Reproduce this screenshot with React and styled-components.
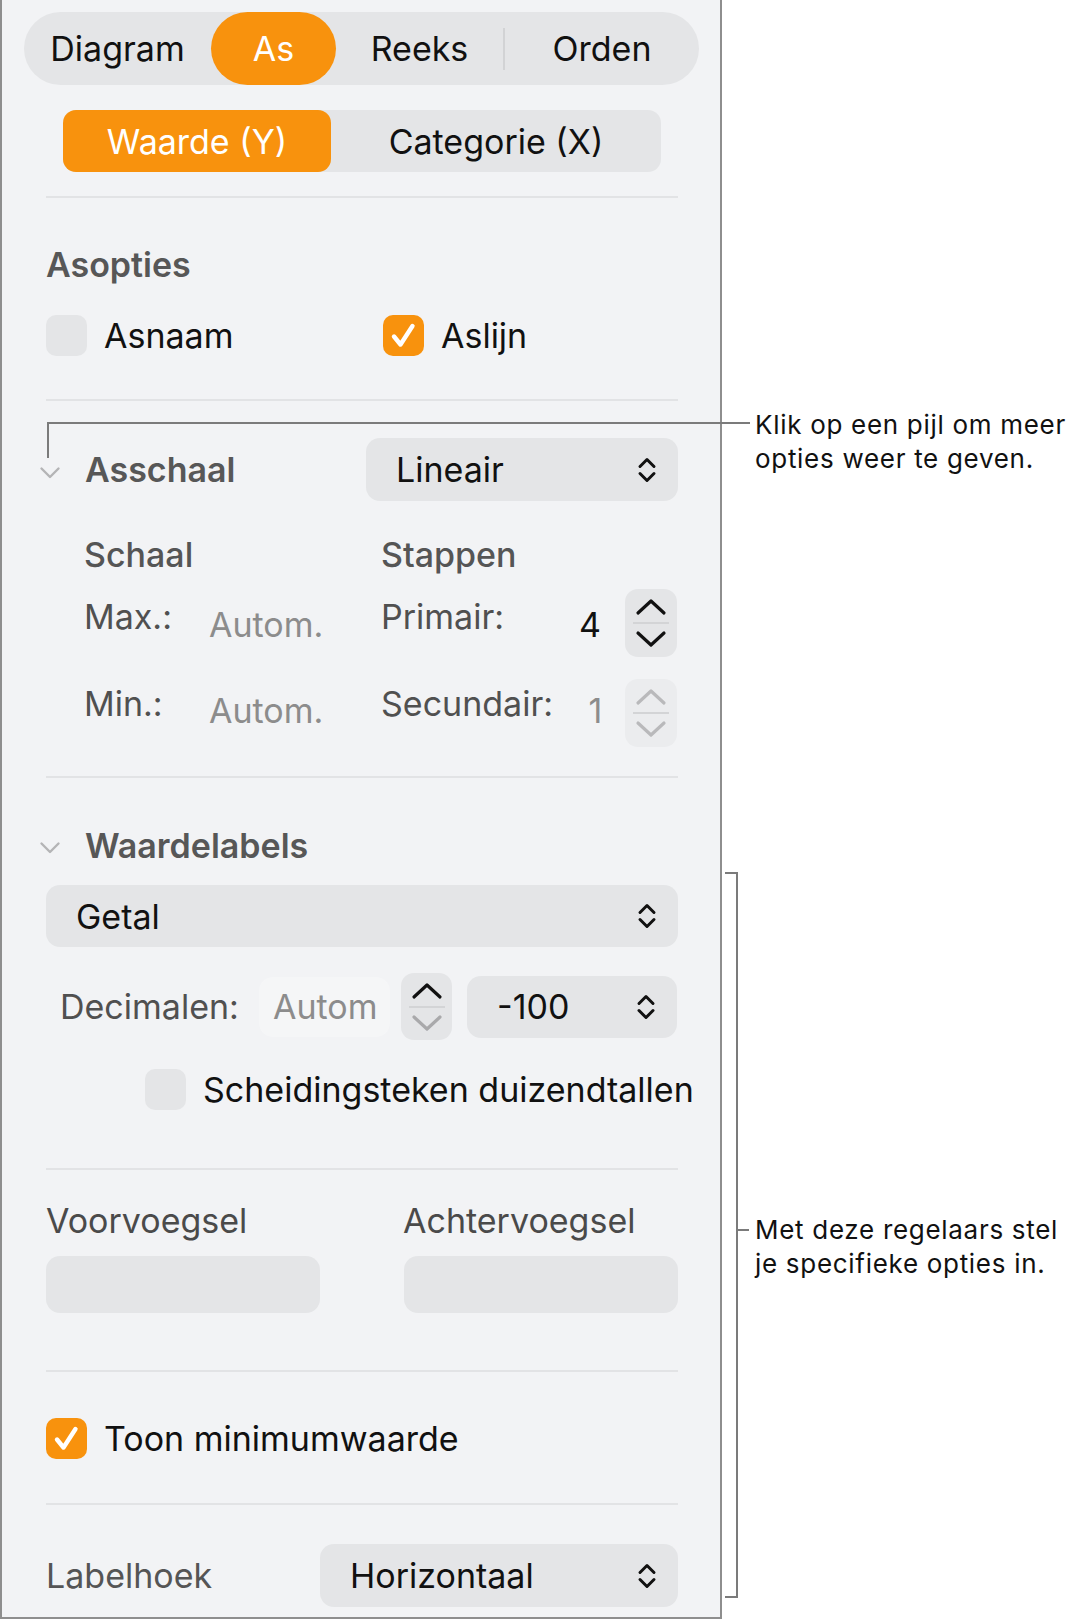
import React from "react";
import styled, { createGlobalStyle } from "styled-components";

const GlobalStyle = createGlobalStyle`
  html, body {
    margin: 0;
    padding: 0;
    background: #ffffff;
  }
  body {
    font-family: Inter, "Noto Sans", "Liberation Sans", sans-serif;
    color: #111111;
  }
`;

const ORANGE = "#f8920d";
const FILL = "#e4e5e7";

const Page = styled.div`
  position: relative;
  width: 1080px;
  height: 1620px;
  display: flex;
  align-items: flex-start;
  overflow: hidden;
`;

const Panel = styled.div`
  width: 718px;
  border: 2px solid #8e8e8e;
  border-top: none;
  background: #f2f3f5;
  padding: 12px 0 10px;
  font-size: 34px;
`;

const TabBar = styled.div`
  margin: 0 21px 0 22px;
  height: 73px;
  border-radius: 37px;
  background: ${FILL};
  display: flex;
  align-items: center;
`;

const Tab = styled.div`
  flex: none;
  width: ${(p) => p.$w}px;
  height: 100%;
  display: flex;
  align-items: center;
  justify-content: center;
  border-radius: 37px;
  background: ${(p) => (p.$active ? ORANGE : "transparent")};
  color: ${(p) => (p.$active ? "#ffffff" : "#111111")};
`;

const TabSep = styled.div`
  flex: none;
  width: 2px;
  height: 42px;
  background: #d2d3d5;
`;

const Body = styled.div`
  padding: 0 42px 0 44px;
`;

const SubSeg = styled.div`
  margin: 25px 17px 0;
  height: 62px;
  border-radius: 13px;
  background: ${FILL};
  display: flex;
`;

const SubItem = styled.div`
  flex: ${(p) => (p.$w ? "none" : "1")};
  width: ${(p) => (p.$w ? `${p.$w}px` : "auto")};
  display: flex;
  align-items: center;
  justify-content: center;
  border-radius: 13px;
  background: ${(p) => (p.$active ? ORANGE : "transparent")};
  color: ${(p) => (p.$active ? "#ffffff" : "#111111")};
`;

const Divider = styled.div`
  height: 2px;
  background: #e2e3e5;
  margin-top: ${(p) => p.$mt}px;
`;

const SectionTitle = styled.div`
  margin-top: ${(p) => p.$mt || 0}px;
  line-height: 40px;
  font-weight: 600;
  color: #575757;
`;

const CheckRow = styled.div`
  margin-top: ${(p) => p.$mt}px;
  padding-left: ${(p) => p.$pl || 0}px;
  height: 42px;
  display: flex;
  align-items: center;
`;

const CheckItem = styled.label`
  display: flex;
  align-items: center;
  gap: 17px;
  width: ${(p) => (p.$w ? `${p.$w}px` : "auto")};
  white-space: nowrap;
`;

const Box = styled.span`
  flex: none;
  width: 41px;
  height: 41px;
  border-radius: 10px;
  background: ${(p) => (p.$on ? ORANGE : FILL)};
  display: flex;
  align-items: center;
  justify-content: center;
`;

const HeaderRow = styled.div`
  margin-top: ${(p) => p.$mt}px;
  height: ${(p) => p.$h}px;
  display: flex;
  align-items: center;
  justify-content: space-between;
`;

const Disclosure = styled.div`
  display: flex;
  align-items: center;
  margin-left: -7px;
  font-weight: 600;
  color: #575757;
`;

const DiscIcon = styled.span`
  flex: none;
  width: 46px;
  display: flex;
  padding-top: 6px;
`;

const Select = styled.div`
  box-sizing: border-box;
  width: ${(p) => (p.$w ? `${p.$w}px` : "100%")};
  height: ${(p) => p.$h || 62}px;
  margin-top: ${(p) => p.$mt || 0}px;
  padding: 0 21px 0 30px;
  border-radius: 14px;
  background: ${FILL};
  display: flex;
  align-items: center;
  justify-content: space-between;
  color: #111111;
`;

const ScaleGrid = styled.div`
  margin-top: ${(p) => p.$mt}px;
  padding-left: 38px;
  height: ${(p) => p.$h}px;
  display: grid;
  grid-template-columns: 125px 172px 198px 46px 52px;
  align-items: center;
`;

const ColHead = styled.div`
  font-weight: 500;
  color: #555555;
`;

const FieldLabel = styled.div`
  color: #505050;
  transform: translateY(${(p) => p.$dy || 0}px);
  white-space: nowrap;
`;

const Ghost = styled.div`
  color: ${(p) => (p.$dim ? "#8c8c8c" : "#111111")};
  transform: translateY(${(p) => p.$dy || 0}px);
`;

const StepBox = styled.div`
  width: ${(p) => p.$w || 52}px;
  height: ${(p) => p.$h || 68}px;
  border-radius: 13px;
  background: ${(p) => (p.$off ? "#ebecee" : FILL)};
  display: flex;
  flex-direction: column;
  align-items: center;
  justify-content: center;
`;

const StepMid = styled.span`
  width: 36px;
  height: 2px;
  margin: 6px 0;
  background: #d3d4d6;
`;

const DecRow = styled.div`
  margin-top: 26px;
  height: 67px;
  padding-left: 14px;
  display: flex;
  align-items: center;
`;

const DecLabel = styled.div`
  width: 199px;
  color: #505050;
`;

const AutoField = styled.div`
  width: 131px;
  height: 60px;
  margin-right: 11px;
  border-radius: 14px;
  box-sizing: border-box;
  padding-left: 14px;
  display: flex;
  align-items: center;
  color: #8c8c8c;
  background: rgba(255, 255, 255, 0.25);
`;

const PairLabels = styled.div`
  margin-top: 30px;
  height: 40px;
  display: grid;
  grid-template-columns: 357px 1fr;
  align-items: center;
  color: #4a4a4a;
`;

const PairInputs = styled.div`
  margin-top: 16px;
  display: grid;
  grid-template-columns: 274px 274px;
  justify-content: space-between;
`;

const TextInput = styled.div`
  height: 57px;
  border-radius: 14px;
  background: ${FILL};
`;

const AngleLabel = styled.div`
  color: #555555;
`;

const Notes = styled.div`
  padding-left: 33px;
  font-size: 26px;
  line-height: 34px;
  letter-spacing: 0.7px;
  color: #111111;
`;

const Note = styled.p`
  margin: ${(p) => p.$mt}px 0 0;
  white-space: nowrap;
`;

const Leaders = styled.svg`
  position: absolute;
  left: 0;
  top: 0;
  pointer-events: none;
`;

const Check = () => (
  <svg width="41" height="41" viewBox="0 0 41 41">
    <path d="M11 21.5 L17.5 29.5 L29.5 11" fill="none" stroke="#fff" strokeWidth="4.4" strokeLinecap="round" strokeLinejoin="round" />
  </svg>
);

const UpDown = () => (
  <svg width="20" height="28" viewBox="0 0 20 28">
    <polyline points="3,10.5 10,3.5 17,10.5" fill="none" stroke="#111" strokeWidth="3" strokeLinecap="round" strokeLinejoin="round" />
    <polyline points="3,17.5 10,24.5 17,17.5" fill="none" stroke="#111" strokeWidth="3" strokeLinecap="round" strokeLinejoin="round" />
  </svg>
);

const Chevron = ({ up, color }) => (
  <svg width="32" height="18" viewBox="0 0 32 18">
    <polyline
      points={up ? "3,15 16,3 29,15" : "3,3 16,15 29,3"}
      fill="none"
      stroke={color}
      strokeWidth="3.2"
      strokeLinecap="round"
      strokeLinejoin="round"
    />
  </svg>
);

const SmallChevron = () => (
  <svg width="22" height="14" viewBox="0 0 22 14">
    <polyline points="2.5,2.5 11,11 19.5,2.5" fill="none" stroke="#b4b4b6" strokeWidth="2.4" strokeLinecap="round" strokeLinejoin="round" />
  </svg>
);

const Stepper = ({ upColor = "#111", downColor = "#111", off, w, h }) => (
  <StepBox $off={off} $w={w} $h={h}>
    <Chevron up color={upColor} />
    <StepMid />
    <Chevron color={downColor} />
  </StepBox>
);

const Checkbox = ({ on, label, w }) => (
  <CheckItem $w={w}>
    <Box $on={on}>{on && <Check />}</Box>
    {label}
  </CheckItem>
);

export default function App() {
  return (
    <Page>
      <GlobalStyle />
      <Panel>
        <TabBar>
          <Tab $w={187}>Diagram</Tab>
          <Tab $w={125} $active>As</Tab>
          <Tab $w={167}>Reeks</Tab>
          <TabSep />
          <Tab $w={194}>Orden</Tab>
        </TabBar>

        <Body>
          <SubSeg>
            <SubItem $w={268} $active>Waarde (Y)</SubItem>
            <SubItem>Categorie (X)</SubItem>
          </SubSeg>

          <Divider $mt={24} />

          <SectionTitle $mt={47}>Asopties</SectionTitle>
          <CheckRow $mt={29}>
            <Checkbox label="Asnaam" w={337} />
            <Checkbox on label="Aslijn" />
          </CheckRow>

          <Divider $mt={43} />

          <HeaderRow $mt={37} $h={63}>
            <Disclosure>
              <DiscIcon><SmallChevron /></DiscIcon>
              Asschaal
            </Disclosure>
            <Select $w={312} $h={63}>
              Lineair
              <UpDown />
            </Select>
          </HeaderRow>

          <ScaleGrid $mt={33} $h={40}>
            <ColHead>Schaal</ColHead>
            <span />
            <ColHead>Stappen</ColHead>
          </ScaleGrid>

          <ScaleGrid $mt={15} $h={68}>
            <FieldLabel $dy={-7}>Max.:</FieldLabel>
            <Ghost $dim $dy={1}>Autom.</Ghost>
            <FieldLabel $dy={-7}>Primair:</FieldLabel>
            <Ghost $dy={1}>4</Ghost>
            <Stepper />
          </ScaleGrid>

          <ScaleGrid $mt={22} $h={68}>
            <FieldLabel $dy={-10}>Min.:</FieldLabel>
            <Ghost $dim $dy={-3}>Autom.</Ghost>
            <FieldLabel $dy={-10}>Secundair:</FieldLabel>
            <Ghost $dim $dy={-3}>&nbsp;1</Ghost>
            <Stepper off upColor="#b9b9bb" downColor="#b9b9bb" />
          </ScaleGrid>

          <Divider $mt={29} />

          <HeaderRow $mt={47} $h={40}>
            <Disclosure>
              <DiscIcon><SmallChevron /></DiscIcon>
              Waardelabels
            </Disclosure>
          </HeaderRow>

          <Select $mt={20} $h={62}>
            Getal
            <UpDown />
          </Select>

          <DecRow>
            <DecLabel>Decimalen:</DecLabel>
            <AutoField>Autom</AutoField>
            <Stepper w={51} h={67} downColor="#a9a9ab" />
            <Select $w={210} $h={62} style={{ marginLeft: 15 }}>
              -100
              <UpDown />
            </Select>
          </DecRow>

          <CheckRow $mt={28} $pl={99}>
            <Checkbox label="Scheidingsteken duizendtallen" />
          </CheckRow>

          <Divider $mt={58} />

          <PairLabels>
            <span>Voorvoegsel</span>
            <span>Achtervoegsel</span>
          </PairLabels>
          <PairInputs>
            <TextInput />
            <TextInput />
          </PairInputs>

          <Divider $mt={57} />

          <CheckRow $mt={45}>
            <Checkbox on label="Toon minimumwaarde" />
          </CheckRow>

          <Divider $mt={44} />

          <HeaderRow $mt={39} $h={63}>
            <AngleLabel>Labelhoek</AngleLabel>
            <Select $w={358} $h={63}>
              Horizontaal
              <UpDown />
            </Select>
          </HeaderRow>
        </Body>
      </Panel>

      <Notes>
        <Note $mt={408}>
          Klik op een pijl om meer
          <br />
          opties weer te geven.
        </Note>
        <Note $mt={737}>
          Met deze regelaars stel
          <br />
          je specifieke opties in.
        </Note>
      </Notes>

      <Leaders width="1080" height="1620" viewBox="0 0 1080 1620">
        <g fill="none" stroke="#7b7b7b" strokeWidth="2">
          <path d="M47 423 H750" />
          <path d="M48 422 V458" />
          <path d="M725 873 H737 V1597 H725" />
          <path d="M737 1230 H749" />
        </g>
      </Leaders>
    </Page>
  );
}
